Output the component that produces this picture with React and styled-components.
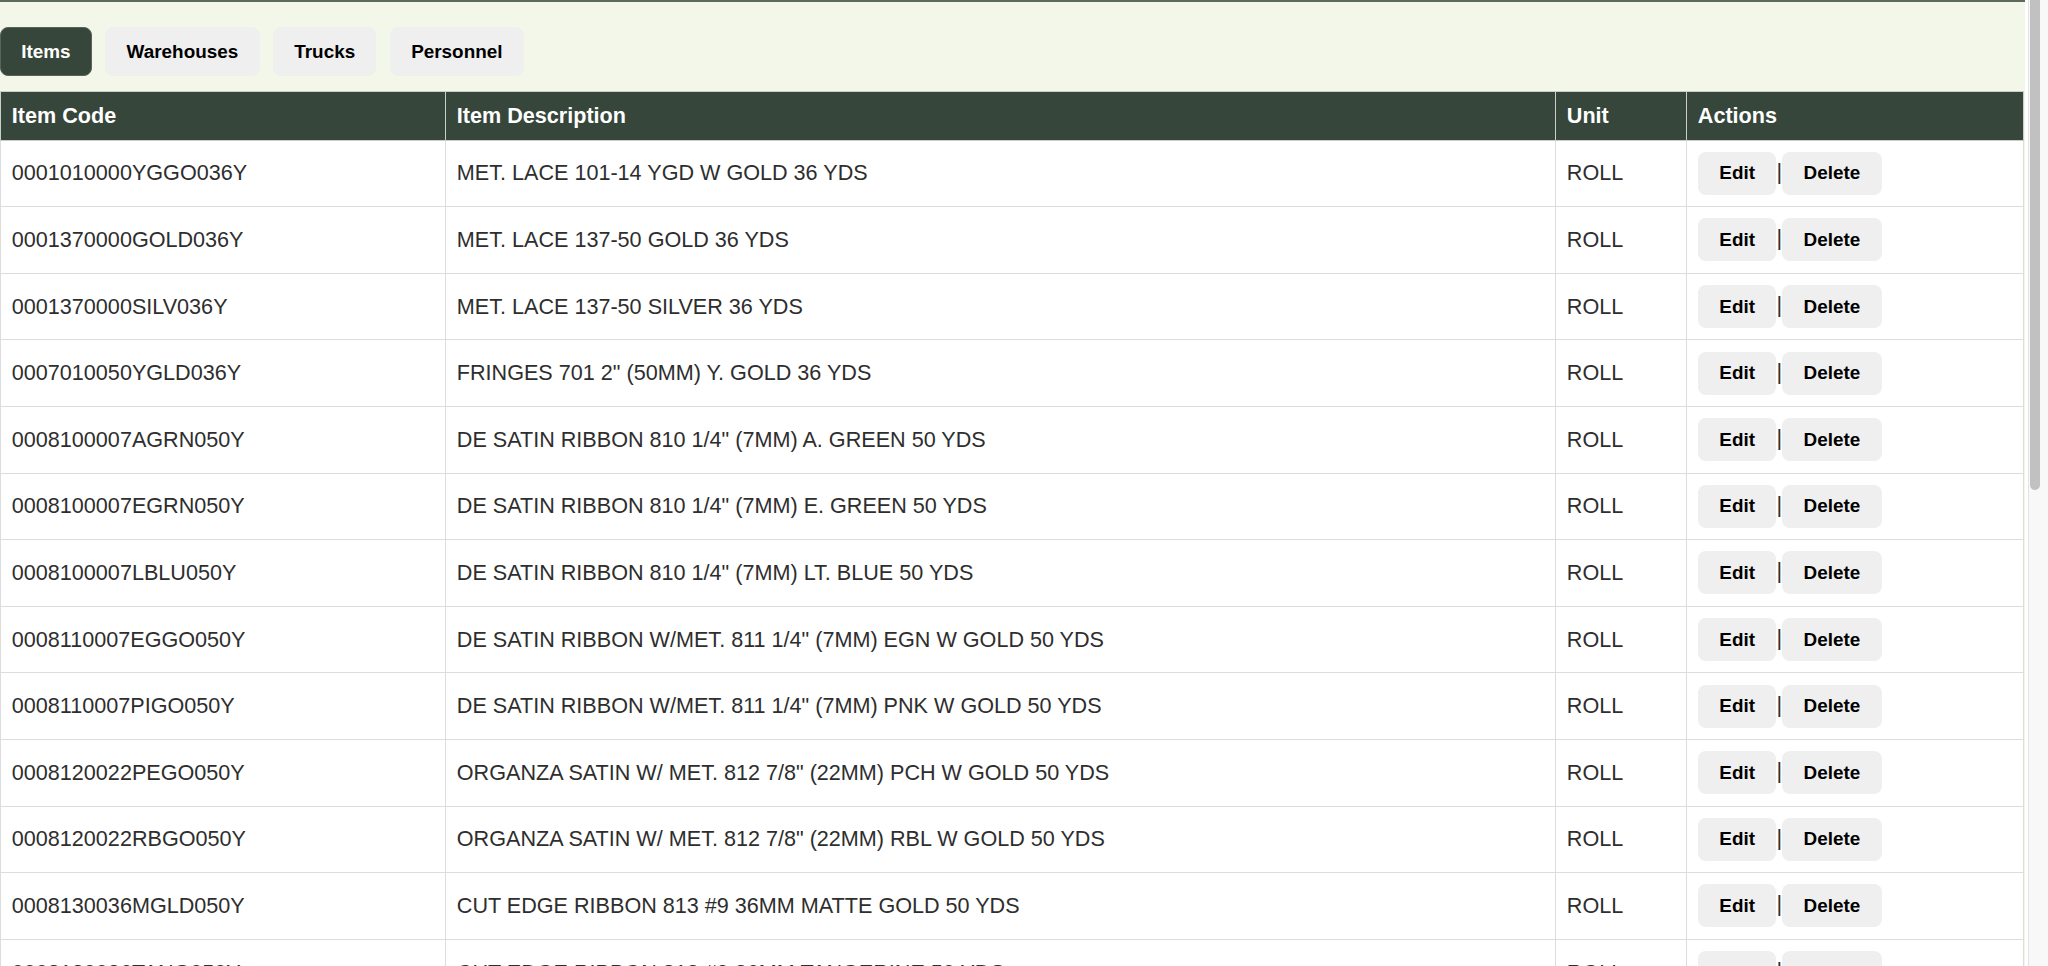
import React from 'react';
import styled, { createGlobalStyle } from 'styled-components';

const tabs = ['Items', 'Warehouses', 'Trucks', 'Personnel'];

const items = [
  ['0001010000YGGO036Y', 'MET. LACE 101-14 YGD W GOLD 36 YDS'],
  ['0001370000GOLD036Y', 'MET. LACE 137-50 GOLD 36 YDS'],
  ['0001370000SILV036Y', 'MET. LACE 137-50 SILVER 36 YDS'],
  ['0007010050YGLD036Y', 'FRINGES 701 2" (50MM) Y. GOLD 36 YDS'],
  ['0008100007AGRN050Y', 'DE SATIN RIBBON 810 1/4" (7MM) A. GREEN 50 YDS'],
  ['0008100007EGRN050Y', 'DE SATIN RIBBON 810 1/4" (7MM) E. GREEN 50 YDS'],
  ['0008100007LBLU050Y', 'DE SATIN RIBBON 810 1/4" (7MM) LT. BLUE 50 YDS'],
  ['0008110007EGGO050Y', 'DE SATIN RIBBON W/MET. 811 1/4" (7MM) EGN W GOLD 50 YDS'],
  ['0008110007PIGO050Y', 'DE SATIN RIBBON W/MET. 811 1/4" (7MM) PNK W GOLD 50 YDS'],
  ['0008120022PEGO050Y', 'ORGANZA SATIN W/ MET. 812 7/8" (22MM) PCH W GOLD 50 YDS'],
  ['0008120022RBGO050Y', 'ORGANZA SATIN W/ MET. 812 7/8" (22MM) RBL W GOLD 50 YDS'],
  ['0008130036MGLD050Y', 'CUT EDGE RIBBON 813 #9 36MM MATTE GOLD 50 YDS'],
  ['0008130036TANG050Y', 'CUT EDGE RIBBON 813 #9 36MM TANGERINE 50 YDS'],
  ['0008130036WHIT050Y', 'CUT EDGE RIBBON 813 #9 36MM WHITE 50 YDS'],
];

const App = () => {
  return (
    <Page>
      <GlobalStyle />
      <Main>
        <TabBar>
          {tabs.map((t, i) => (
            <Tab key={t} $active={i === 0}>{t}</Tab>
          ))}
        </TabBar>
        <Table>
          <thead>
            <tr>
              <Th $width={445}>Item Code</Th>
              <Th $width={1110}>Item Description</Th>
              <Th $width={131}>Unit</Th>
              <Th>Actions</Th>
            </tr>
          </thead>
          <tbody>
            {items.map(([code, desc]) => (
              <tr key={code}>
                <Td>{code}</Td>
                <Td>{desc}</Td>
                <Td>ROLL</Td>
                <Td>
                  <ActionButton>Edit</ActionButton>|<ActionButton>Delete</ActionButton>
                </Td>
              </tr>
            ))}
          </tbody>
        </Table>
      </Main>
      <Gutter>
        <Track>
          <Thumb />
        </Track>
      </Gutter>
    </Page>
  );
};

// Styled Components
const GlobalStyle = createGlobalStyle`
  html, body {
    margin: 0;
    padding: 0;
    overflow: hidden;
    background: #ffffff;
  }
  body {
    font-family: "Liberation Sans", Arial, sans-serif;
  }
`;

const Page = styled.div`
  display: flex;
  height: 100vh;
  overflow: hidden;
`;

const Main = styled.div`
  flex: 1;
  min-width: 0;
  background-color: #f3f7e9;
  border-top: 2px solid #5d6a60;
  padding: 25px 1px 0 0;
  overflow: hidden;
`;

const TabBar = styled.div`
  display: flex;
  gap: 13.5px;
  margin-bottom: 15px;
`;

const Tab = styled.button`
  font-family: "Liberation Sans", Arial, sans-serif;
  font-size: 18.9px;
  font-weight: bold;
  line-height: normal;
  padding: 12.5px 20.25px;
  border-radius: 8px;
  border: 1px solid ${(p) => (p.$active ? '#56645a' : '#efefef')};
  background-color: ${(p) => (p.$active ? '#36463b' : '#efefef')};
  color: ${(p) => (p.$active ? '#ffffff' : '#000000')};
  cursor: pointer;
`;

const Table = styled.table`
  width: 100%;
  table-layout: fixed;
  border-collapse: collapse;
  background-color: #ffffff;
  font-size: 21.6px;
`;

const Th = styled.th`
  box-sizing: border-box;
  width: ${(p) => (p.$width ? `${p.$width}px` : 'auto')};
  background-color: #36463b;
  color: #ffffff;
  text-align: left;
  font-weight: bold;
  line-height: normal;
  padding: 10.8px;
  border: 1px solid #c9cec9;
`;

const Td = styled.td`
  color: #2e2e2e;
  line-height: normal;
  padding: 11.3px 10.8px;
  border: 1px solid #dddddd;
  white-space: nowrap;
  overflow: hidden;
`;

const ActionButton = styled.button`
  font-family: "Liberation Sans", Arial, sans-serif;
  font-size: 18.9px;
  font-weight: bold;
  line-height: normal;
  padding: 10.5px 21.5px;
  border: none;
  border-radius: 8px;
  background-color: #efefef;
  color: #000000;
  vertical-align: middle;
`;

const Gutter = styled.div`
  width: 20px;
  display: flex;
  background-color: #ffffff;
  padding-left: 3px;
`;

const Track = styled.div`
  flex: 1;
  background-color: #f8f8f8;
  border-left: 1px solid #e4e4e4;
  padding-left: 1px;
`;

const Thumb = styled.div`
  width: 10px;
  height: 490px;
  background-color: #c1c1c1;
  border-radius: 0 0 5px 5px;
`;

export default App;
